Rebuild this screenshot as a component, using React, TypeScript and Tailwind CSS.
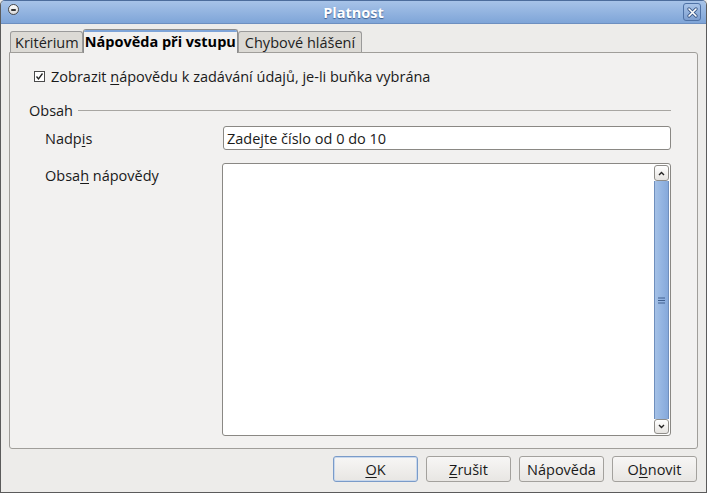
import React from "react";

const font = { fontFamily: "'Open Sans', 'DejaVu Sans', sans-serif" };

function Tab({ label, active, pad }: { label: string; active?: boolean; pad: string }) {
  if (active) {
    return (
      <div className={"relative z-10 -mb-px h-[24px] rounded-t-[3px] border border-b-0 border-[#8d8d8d] bg-[#f2f1f0] pt-[2px] font-bold text-black " + pad}>
        <div className="absolute left-0 right-0 top-0 h-[2px] rounded-t-[3px] bg-[#7ea4d8]" />
        {label}
      </div>
    );
  }
  return (
    <div className={"mt-[3px] h-[21px] rounded-t-[3px] border border-b-0 border-[#9a9a9a] bg-[#dcdad5] pt-[1px] text-[#222] " + pad}>
      {label}
    </div>
  );
}

function Button({ children, focus }: { children: React.ReactNode; focus?: boolean }) {
  return (
    <div
      className={
        "flex h-[26px] w-[85px] items-center justify-center rounded-[3px] border bg-gradient-to-b from-[#f7f6f5] to-[#e8e6e3] text-[#1a1a1a] " +
        (focus ? "border-[#7a9bc9] shadow-[inset_0_0_0_1px_#c9d8ec]" : "border-[#a3a19d]")
      }
    >
      {children}
    </div>
  );
}

export default function App() {
  return (
    <div className="h-[493px] w-[707px] overflow-hidden bg-[#edecea] text-[14.5px] leading-[19px]" style={font}>
      <div className="flex h-full flex-col rounded-t-[5px] border border-[#5b5b5b] border-t-[#4d6d9c]">
        {/* title bar */}
        <div className="relative flex h-[23px] items-center justify-center rounded-t-[4px] border-b border-[#6d8fc0] bg-gradient-to-b from-[#a7c3e8] to-[#7fa5d8]">
          <div className="absolute left-[7px] top-[3px] h-[11px] w-[11px] rounded-full border border-[#4a4a4a] bg-gradient-to-b from-white to-[#d8d8d8]">
            <div className="absolute left-[2px] top-[4px] h-[2px] w-[5px] rounded bg-[#333]" />
          </div>
          <span className="font-bold text-white [text-shadow:0_1px_1px_#3e5f8f]">Platnost</span>
          <div className="absolute right-[5px] top-[2px] flex h-[18px] w-[18px] items-center justify-center rounded-[3px] border border-[#4f72a6] bg-gradient-to-b from-[#a9c4e8] to-[#7e9fd0]">
            <svg width="11" height="11" viewBox="0 0 11 11">
              <path d="M2 2 L9 9 M9 2 L2 9" stroke="#3d5a88" strokeWidth="3.2" strokeLinecap="round" />
              <path d="M2 2 L9 9 M9 2 L2 9" stroke="#ffffff" strokeWidth="1.6" strokeLinecap="round" />
            </svg>
          </div>
        </div>

        {/* body */}
        <div className="flex flex-1 flex-col px-[8px] pt-[4px]">
          <div className="flex items-end pl-[1px]">
            <Tab label="Kritérium" pad="pl-[4px] pr-[3px]" />
            <Tab label="Nápověda při vstupu" active pad="px-[1px]" />
            <Tab label="Chybové hlášení" pad="px-[6px]" />
          </div>
          <div className="flex h-[397px] flex-col rounded-b-[3px] rounded-tr-[3px] border border-[#a09e9a] bg-[#f2f1f0] pl-[23px] pr-[26px] pt-[14px]">
            <div className="flex items-center gap-[6px]">
              <svg width="11" height="11" viewBox="0 0 11 11" className="ml-[1px]">
                <rect x="0.5" y="0.5" width="10" height="10" fill="#fff" stroke="#4a4a4a" />
                <path d="M2.5 5.5 L4.5 8 L8.5 2.5" stroke="#222" strokeWidth="1.3" fill="none" />
              </svg>
              <span className="text-[#1a1a1a]">
                Zobrazit <u className="underline-offset-2">n</u>ápovědu k zadávání údajů, je-li buňka vybrána
              </span>
            </div>

            <div className="mt-[15px] flex items-center gap-[5px]">
              <span className="-ml-[4px] text-[#1a1a1a]">Obsah</span>
              <div className="h-px flex-1 bg-[#a8a6a2]" />
            </div>

            <div className="mt-[6px] flex flex-col pl-[12px]">
              <div className="flex items-center">
                <span className="w-[178px] text-[#1a1a1a]">
                  Nadp<u className="underline-offset-2">i</u>s
                </span>
                <div className="flex h-[24px] flex-1 items-center rounded-[3px] border border-[#8a8884] bg-white pl-[3px] text-[#1a1a1a]">
                  Zadejte číslo od 0 do 10
                </div>
              </div>
              <div className="mt-[13px] flex">
                <span className="w-[177px] pt-[3px] text-[#1a1a1a]">
                  Obsa<u className="underline-offset-2">h</u> nápovědy
                </span>
                <div className="flex h-[273px] flex-1 justify-end rounded-[3px] border border-[#8a8884] bg-white p-[1px]">
                  <div className="flex w-[15px] flex-col">
                    <div className="flex h-[16px] items-center justify-center rounded-[3px] border border-[#8f8d89] bg-gradient-to-b from-white to-[#e6e4e1]">
                      <svg width="7" height="5" viewBox="0 0 7 5">
                        <path d="M1 4 L3.5 1.5 L6 4" stroke="#222" strokeWidth="1.4" fill="none" />
                      </svg>
                    </div>
                    <div className="flex flex-1 items-center justify-center border-x border-[#6f8fbd] bg-gradient-to-r from-[#a5c1e6] via-[#94b5e2] to-[#86a9db]">
                      <svg width="7" height="7" viewBox="0 0 7 7">
                        <path d="M0 1 H7 M0 3.5 H7 M0 6 H7" stroke="#3f5f8f" strokeWidth="1" />
                      </svg>
                    </div>
                    <div className="flex h-[15px] items-center justify-center rounded-[3px] border border-[#8f8d89] bg-gradient-to-b from-white to-[#e6e4e1]">
                      <svg width="7" height="5" viewBox="0 0 7 5">
                        <path d="M1 1 L3.5 3.5 L6 1" stroke="#222" strokeWidth="1.4" fill="none" />
                      </svg>
                    </div>
                  </div>
                </div>
              </div>
            </div>
          </div>

          <div className="mt-[7px] flex justify-end gap-[8px] pr-[1px]">
            <Button focus>
              <u className="underline-offset-2">O</u>K
            </Button>
            <Button>
              <u className="underline-offset-2">Z</u>rušit
            </Button>
            <Button>Nápověda</Button>
            <Button>
              O<u className="underline-offset-2">b</u>novit
            </Button>
          </div>
        </div>
      </div>
    </div>
  );
}
